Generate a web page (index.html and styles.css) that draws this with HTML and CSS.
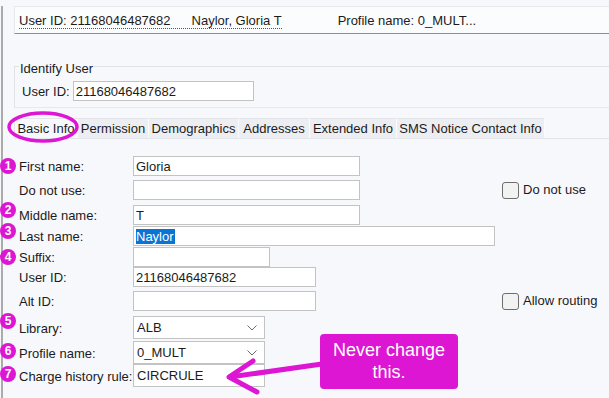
FILE: index.html
```html
<!DOCTYPE html>
<html lang="en">
<head>
  <meta charset="UTF-8" />
  <title>User - Basic Info</title>
  <link rel="stylesheet" href="styles.css">
</head>
<body>
  <div class="app">
    <div class="header">
      <span class="who"><span>User ID: 21168046487682</span><span class="name">Naylor, Gloria T</span></span>
      <span class="profile">Profile name: 0_MULT...</span>
    </div>

    <div class="group">
      <div class="group-title">Identify User</div>
      <div class="group-row">
        <span>User ID:</span>
        <div class="field w-ident">21168046487682</div>
      </div>
    </div>

    <div class="tabs">
      <div class="tab active">Basic Info</div>
      <div class="tab">Permission</div>
      <div class="tab">Demographics</div>
      <div class="tab">Addresses</div>
      <div class="tab">Extended Info</div>
      <div class="tab">SMS Notice Contact Info</div>
    </div>

    <div class="form">
      <div class="lbl"><span class="badge">1</span>First name:</div>
      <div class="field w-name">Gloria</div>

      <div class="lbl">Do not use:</div>
      <div class="field w-name"></div>
      <label class="check"><span class="box"></span>Do not use</label>

      <div class="lbl"><span class="badge up">2</span>Middle name:</div>
      <div class="field w-name">T</div>

      <div class="lbl"><span class="badge up">3</span>Last name:</div>
      <div class="field w-last"><span class="sel">Naylor</span></div>

      <div class="lbl"><span class="badge">4</span>Suffix:</div>
      <div class="field w-suffix"></div>

      <div class="lbl">User ID:</div>
      <div class="field w-id">21168046487682</div>

      <div class="lbl">Alt ID:</div>
      <div class="field w-id"></div>
      <label class="check"><span class="box"></span>Allow routing</label>

      <div class="lbl tall"><span class="badge up">5</span>Library:</div>
      <div class="field select">ALB<svg class="chev" width="10" height="6" viewBox="0 0 10 6"><path d="M0.5 0.5 L5 5 L9.5 0.5" fill="none" stroke="#6a6a6a" stroke-width="1"/></svg></div>

      <div class="lbl tall"><span class="badge">6</span>Profile name:</div>
      <div class="field select">0_MULT<svg class="chev" width="10" height="6" viewBox="0 0 10 6"><path d="M0.5 0.5 L5 5 L9.5 0.5" fill="none" stroke="#6a6a6a" stroke-width="1"/></svg></div>

      <div class="lbl tall"><span class="badge">7</span>Charge history rule:</div>
      <div class="field select">CIRCRULE</div>
    </div>
  </div>

  <!-- annotations -->
  <svg class="marks" width="609" height="398" viewBox="0 0 609 398">
    <ellipse cx="43" cy="127" rx="34" ry="14" fill="none" stroke="#dc16d2" stroke-width="3.5"/>
    <path d="M322 364 L230 377" fill="none" stroke="#dc16d2" stroke-width="5" stroke-linecap="round"/>
    <path d="M253 361 L229 377 L257 392" fill="none" stroke="#dc16d2" stroke-width="5" stroke-linecap="round" stroke-linejoin="round"/>
  </svg>
  <div class="callout">Never change<br>this.</div>
</body>
</html>
```

FILE: styles.css
```css
body {
  margin: 0; width: 609px; height: 398px; overflow: hidden; position: relative;
  background: #f7f8fc; color: #1b1b1b;
  font-family: "Liberation Sans", Arial, sans-serif; font-size: 13px;
}
.app { margin-left: 1px; border-left: 2px solid #ababab; height: 398px; }

.header {
  margin: 6px 0 0 11px; height: 28px; box-sizing: border-box;
  background: #fbfcfe; border: 1px solid #e6e8ec; border-right: none; border-bottom: 1px solid #8e8e8e;
  display: flex; align-items: flex-start; padding: 6px 0 0 4px;
}
.header .who { display: flex; gap: 21px; line-height: 15px; border-bottom: 1px dotted #555; }
.header .profile { margin-left: 56px; line-height: 15px; }

.group {
  margin: 32px 0 0 11px; height: 40px;
  border-top: 1px solid #e1e3e7; border-left: 1px solid #e1e3e7; border-bottom: 1px solid #e6e8ec;
}
.group-title {
  width: fit-content; margin: -6px 0 0 4px; padding: 0 1px;
  background: #f7f8fc; line-height: 15px;
}
.group-row { display: flex; align-items: center; gap: 3px; margin: 5px 0 0 7px; }

.tabs {
  margin: 10px 0 0 11px; height: 20px; display: flex;
  border-bottom: 1px solid #e3e5ea;
}
.tab {
  box-sizing: border-box; height: 20px; line-height: 20px; text-align: center; white-space: nowrap;
  background: #eceef2; border-top: 1px solid #e3e5ea; border-right: 1px solid #fafbfd;
}
.tab.active { background: #f7f8fc; border-left: 1px solid #e3e5ea; }
.tab:nth-child(1) { width: 64px; }
.tab:nth-child(2) { width: 71px; }
.tab:nth-child(3) { width: 90px; }
.tab:nth-child(4) { width: 71px; }
.tab:nth-child(5) { width: 87px; }
.tab:nth-child(6) { width: 148px; }

.form {
  margin-left: 11px; padding: 17px 0 0 5px;
  display: grid; grid-template-columns: 114px 369px auto;
  grid-template-rows: 24px 25px 21px 21px 20px 24px 25px 25px 23px 23px;
  align-items: start;
}
.lbl { grid-column: 1; position: relative; line-height: 20px; padding-top: 1px; white-space: nowrap; }
.lbl.tall { line-height: 23px; }

.field {
  box-sizing: border-box; height: 20px; line-height: 19px; padding: 0 2px;
  background: #fff; border: 1px solid #c3c3c3; white-space: nowrap;
}
.w-ident { width: 181px; }
.w-name { width: 227px; }
.w-last { width: 362px; }
.w-suffix { width: 137px; }
.w-id { width: 183px; }
.select {
  width: 132px; height: 23px; line-height: 21px; padding-left: 3px;
  display: flex; justify-content: space-between; align-items: center;
}
.chev { margin-right: 5px; }
.sel { background: #0a74d4; color: #fff; padding-right: 1px; }

.check { grid-column: 3; display: flex; align-items: center; gap: 4px; line-height: 20px; }
.check .box {
  width: 15px; height: 15px; border: 1px solid #6e6e6e; border-radius: 3px; background: #f2f2f3;
}

.badge {
  position: absolute; left: -19px; top: 2px; width: 16px; height: 16px; border-radius: 50%;
  background: #dc16d2; color: #fff; font-size: 12px; font-weight: bold; line-height: 16px; text-align: center;
}
.badge.up { top: -3px; }

.marks { position: absolute; left: 0; top: 0; pointer-events: none; }
.callout {
  position: absolute; left: 320px; top: 334px; width: 138px; height: 55px; box-sizing: border-box;
  padding-top: 5px; border-radius: 4px; background: #dc16d2; color: #fff;
  font-size: 18px; line-height: 22px; text-align: center;
}
```
